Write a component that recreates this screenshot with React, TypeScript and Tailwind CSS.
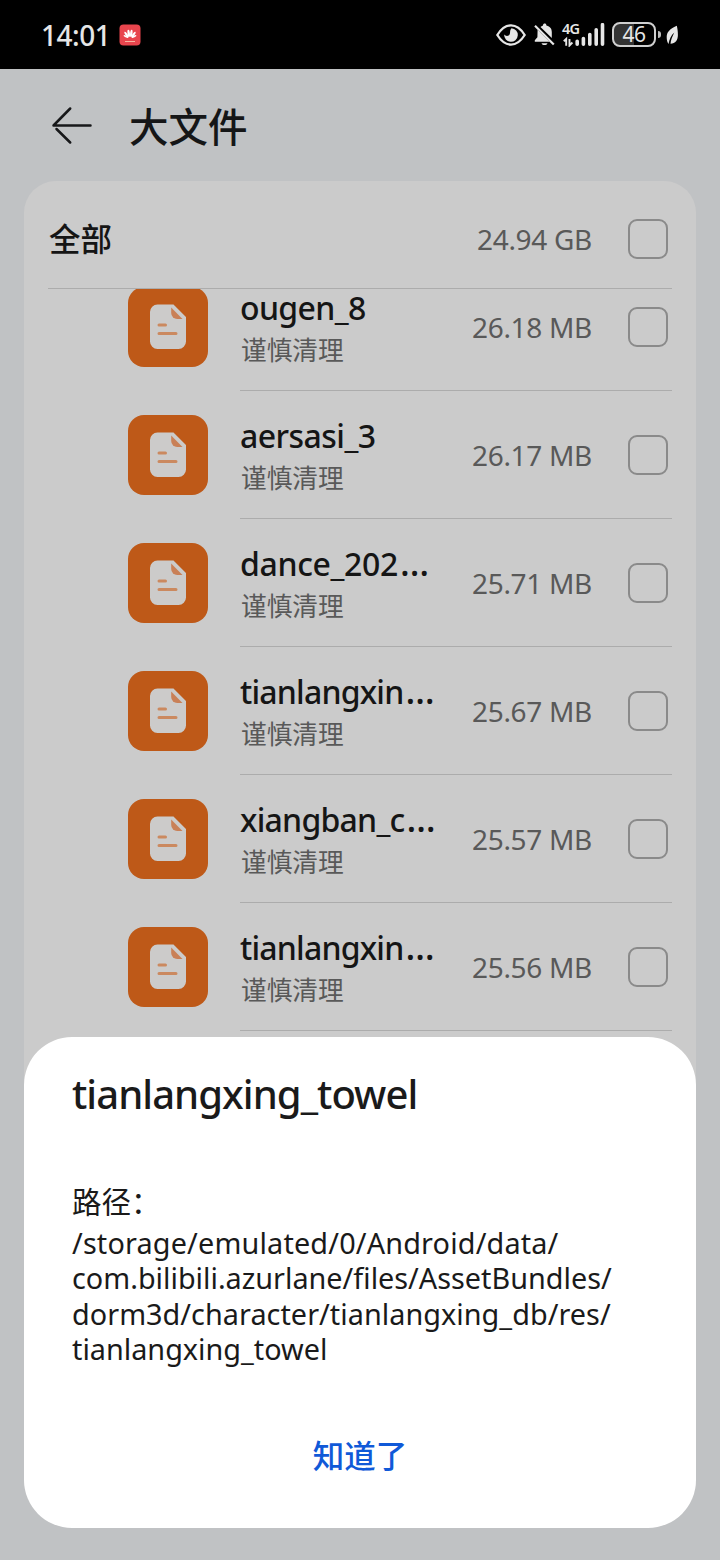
import React from 'react';

interface FileItem {
  name: string;
  size: string;
  truncated?: boolean;
  nameClass: string;
}

const files: FileItem[] = [
  { name: 'ougen_8', size: '26.18 MB', nameClass: 'tracking-[-0.65px]' },
  { name: 'aersasi_3', size: '26.17 MB', nameClass: 'tracking-[-0.55px]' },
  { name: 'dance_202', size: '25.71 MB', truncated: true, nameClass: 'tracking-[-0.35px]' },
  { name: 'tianlangxin', size: '25.67 MB', truncated: true, nameClass: 'tracking-[-0.8px]' },
  { name: 'xiangban_c', size: '25.57 MB', truncated: true, nameClass: 'tracking-[-0.75px]' },
  { name: 'tianlangxin', size: '25.56 MB', truncated: true, nameClass: 'tracking-[-0.8px]' },
];

const pathLines = [
  { text: '/storage/emulated/0/Android/data/', className: 'tracking-[0.17px]' },
  { text: 'com.bilibili.azurlane/files/AssetBundles/', className: 'tracking-normal' },
  { text: 'dorm3d/character/tianlangxing_db/res/', className: 'tracking-[0.04px]' },
  { text: 'tianlangxing_towel', className: 'tracking-normal' },
];

const StatusBar: React.FC = () => (
  <header className="flex h-[69px] shrink-0 items-center bg-black pl-[41px] pr-[42px] text-[#e6e6e6]">
    <span className="w-[78px] whitespace-nowrap text-[28px] font-medium leading-none tracking-[-0.5px]">14:01</span>
    {/* Notification badge */}
    <svg width="22" height="22" viewBox="0 0 22 22">
      <rect x="0.5" y="0.5" width="21" height="21" rx="4" fill="#e8454d" />
      <g fill="#fff">
        <ellipse cx="9.7" cy="9.4" rx="1.2" ry="3.6" transform="rotate(-7 9.7 9.4)" />
        <ellipse cx="12.3" cy="9.4" rx="1.2" ry="3.6" transform="rotate(7 12.3 9.4)" />
        <ellipse cx="7.5" cy="10.6" rx="1.1" ry="3.4" transform="rotate(-34 7.5 10.6)" />
        <ellipse cx="14.5" cy="10.6" rx="1.1" ry="3.4" transform="rotate(34 14.5 10.6)" />
        <ellipse cx="6.9" cy="12.5" rx="0.9" ry="2.6" transform="rotate(-62 6.9 12.5)" />
        <ellipse cx="15.1" cy="12.5" rx="0.9" ry="2.6" transform="rotate(62 15.1 12.5)" />
      </g>
      <path d="M6 17.5h10" stroke="#f7b5a0" strokeWidth="1" />
    </svg>

    <div className="ml-auto flex items-center">
      {/* Eye comfort */}
      <svg width="30" height="22" viewBox="0 0 30 22" fill="none">
        <path d="M1.3 11C5.5 4.3 10 1.4 15 1.4S24.5 4.3 28.7 11C24.5 17.7 20 20.6 15 20.6S5.5 17.7 1.3 11Z" stroke="currentColor" strokeWidth="2.3" />
        <path d="M15.5 4.2A6.8 6.8 0 1 1 8.2 10.5C9.5 12.5 13 12.5 13.8 10C14.5 8 13.5 6 15.5 4.2Z" fill="currentColor" />
      </svg>
      {/* Muted bell */}
      <svg className="ml-[8px]" width="21" height="23" viewBox="0 0 21 23">
        <path d="M6.5 4C7.5 3 8.5 2.6 9 2.4C9 .9 9.8.4 10.7.4S12.3.9 12.4 2.4C16.3 3.4 17.8 5.8 17.8 9V15Z" fill="currentColor" />
        <path d="M3.6 6.8L15.6 18.8H.8V17.2L3.4 14.3Z" fill="currentColor" />
        <path d="M7.5 20.2H13.5C12.8 22.7 8.2 22.7 7.5 20.2Z" fill="currentColor" />
        <path d="M1 2.8L19.8 21.5" stroke="currentColor" strokeWidth="2.2" />
      </svg>
      {/* Mobile signal */}
      <div className="relative ml-[8px] h-[24px] w-[42px]">
        <span className="absolute -left-px -top-px text-[14.5px] font-semibold leading-[13px] tracking-[-0.8px]">4G</span>
        <svg width="42" height="24" viewBox="0 0 42 24" fill="none" stroke="currentColor">
          <path d="M.8 18.3L3.2 16V22.8M6.5 16V22.5L9.4 19.5" strokeWidth="1.9" />
          <path d="M14.2 18.3V21.2M20.4 15.5V21.2M26.8 11.5V21.2M33.2 6.7V21.2M39.5 1.7V21.2" strokeWidth="3.6" strokeLinecap="round" />
        </svg>
      </div>
      {/* Battery */}
      <div className="ml-[7px] flex h-[25px] w-[44px] items-center justify-center rounded-[8px] border-2 border-[#cfcfcf] bg-linear-to-r from-[#333] from-50% to-black to-50%">
        <span className="text-[21px] leading-none tracking-[-0.5px]">46</span>
      </div>
      <span className="ml-[2px] h-[7px] w-[3px] rounded-r-sm bg-[#bcbcbc]" />
      <svg className="ml-[5px]" width="12" height="20" viewBox="0 0 12 20">
        <path d="M10.8.7C3.3 4 .7 7.5.7 12C.7 15 1.2 17 2.5 19C3.5 14 5 10.5 8.3 7.5C6.3 11.5 4.8 14.8 4.5 18.8C9.5 18.5 11.9 15 11.9 10C11.9 6.5 11.5 3.5 10.8.7Z" fill="currentColor" />
      </svg>
    </div>
  </header>
);

const Checkbox: React.FC = () => (
  <span className="size-[40px] shrink-0 rounded-[9px] border-2 border-[#8a8a8a]" />
);

const FileIcon: React.FC = () => (
  <svg className="shrink-0" width="80" height="80" viewBox="0 0 80 80">
    <rect width="80" height="80" rx="16" fill="#be5918" />
    <path d="M29.5 17.5H45.5L58 30V54.5A7.5 7.5 0 0 1 50.5 62H29.5A7.5 7.5 0 0 1 22 54.5V25A7.5 7.5 0 0 1 29.5 17.5Z" fill="#cccbca" />
    <path d="M43.2 20.5V26A6 6 0 0 0 49.2 32H54.5Z" fill="#c98057" />
    <path d="M31 38H37.5M31 46.5H48" stroke="#cb895f" strokeWidth="3" strokeLinecap="round" />
  </svg>
);

const FileRow: React.FC<{ file: FileItem }> = ({ file }) => (
  <li className="flex h-[128px] items-center gap-8 pl-[104px] pr-6">
    <FileIcon />
    <div className="flex h-full min-w-0 flex-1 items-center border-b border-[#acacac] pr-1">
      <div className="flex min-w-0 flex-1 flex-col pt-[9px]">
        <span className={`whitespace-nowrap text-[32px] font-medium leading-[40px] text-[#151515] ${file.nameClass}`}>
          {file.name}
          {file.truncated && <span className="ml-[2px] text-[36px] leading-none">…</span>}
        </span>
        <span className="pl-px text-[25.7px] leading-[46px] text-[#595959]">谨慎清理</span>
      </div>
      <span className="mr-9 whitespace-nowrap text-[28px] tracking-[-0.3px] text-[#595959]">{file.size}</span>
      <Checkbox />
    </div>
  </li>
);

export default function App() {
  return (
    <div className="relative flex h-[1560px] w-[720px] flex-col overflow-hidden bg-[#c0c2c4] font-['Noto_Sans','Noto_Sans_CJK_SC',sans-serif]">
      <StatusBar />

      <div className="flex h-[112px] shrink-0 items-center pl-[51px]">
        <svg width="42" height="40" viewBox="0 0 42 40" fill="none" stroke="#17181a" strokeWidth="2.5" strokeLinecap="round" strokeLinejoin="round">
          <path d="M39.5 20.5H2.5L19.2 3.5M5.5 24L19.2 37.5" />
        </svg>
        <h1 className="ml-[36px] pt-1.5 text-[39.5px] font-medium leading-none text-[#151617]">大文件</h1>
      </div>

      <main className="mx-6 mb-[120px] flex-1 overflow-hidden rounded-t-[32px] bg-[#cbcbcb]">
        <div className="mx-6 flex h-[108px] items-center border-b border-[#acacac] pr-1 pt-2">
          <span className="flex-1 pl-px pt-px text-[31.5px] font-medium text-[#151515]">全部</span>
          <span className="mr-9 text-[28px] tracking-[-0.3px] text-[#595959]">24.94 GB</span>
          <Checkbox />
        </div>
        <div className="overflow-hidden">
          {/* List is scrolled slightly under the header */}
          <ul className="-mt-[26px]">
            {files.map((file, i) => (
              <FileRow key={i} file={file} />
            ))}
          </ul>
        </div>
      </main>

      <div
        role="dialog"
        className="absolute inset-x-6 bottom-8 flex h-[491px] flex-col rounded-[48px] bg-white px-12 text-[#1a1a1a]"
      >
        <h2 className="mt-[29px] whitespace-nowrap text-[40px] font-medium leading-[56px] tracking-[-0.95px]">
          tianlangxing_towel
        </h2>
        <div className="mt-[59px] text-[28.8px] leading-[35.4px]">
          <p className="h-[44px] text-[29.5px] leading-[42px]">路径：</p>
          {pathLines.map((line) => (
            <p key={line.text} className={`whitespace-nowrap ${line.className}`}>
              {line.text}
            </p>
          ))}
        </div>
        <button className="mt-[65px] self-center text-[31.5px] font-medium leading-[48px] text-[#1059d8]">
          知道了
        </button>
      </div>
    </div>
  );
}
